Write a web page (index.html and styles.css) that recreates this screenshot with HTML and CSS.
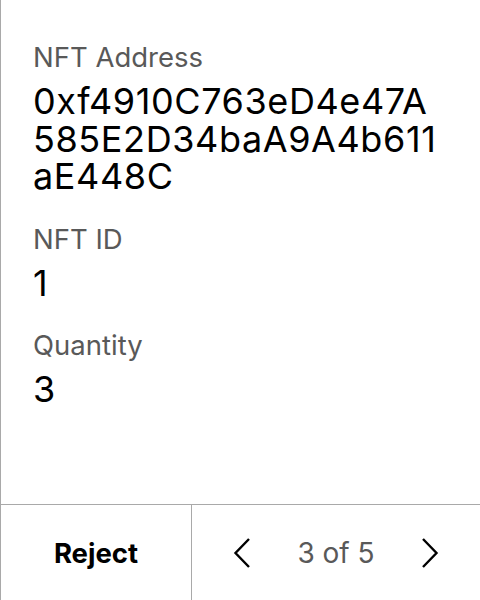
FILE: index.html
```html
<!DOCTYPE html>
<html>
<head>
<meta charset="utf-8">
<link rel="stylesheet" href="styles.css">
</head>
<body>
<div class="screen">
  <div class="content">
    <div class="field">
      <div class="label">NFT Address</div>
      <div class="value">0xf4910C763eD4e47A<br>585E2D34baA9A4b611<br>aE448C</div>
    </div>
    <div class="field">
      <div class="label">NFT ID</div>
      <div class="value">1</div>
    </div>
    <div class="field">
      <div class="label">Quantity</div>
      <div class="value">3</div>
    </div>
  </div>
  <div class="footer">
    <div class="reject">Reject</div>
    <div class="pager">
      <svg class="chev" viewBox="0 0 18 32" width="18" height="32"><path d="M16 2 L2.5 16 L16 30" fill="none" stroke="#000" stroke-width="2.4"/></svg>
      <span class="count">3 of 5</span>
      <svg class="chev" viewBox="0 0 18 32" width="18" height="32"><path d="M2 2 L15.5 16 L2 30" fill="none" stroke="#000" stroke-width="2.4"/></svg>
    </div>
  </div>
</div>
</body>
</html>
```
FILE: styles.css
```css
html, body { margin: 0; padding: 0; background: #fff; }
body { font-family: Inter, "Noto Sans", sans-serif; color: #000; }
.screen {
  height: 600px;
  border-left: 1px solid #a9a9a9;
  display: flex;
  flex-direction: column;
  box-sizing: border-box;
}
.content {
  flex: 1;
  padding: 41px 0 0 32px;
  display: flex;
  flex-direction: column;
  gap: 27px;
}
.label {
  font-size: 27.5px;
  line-height: 32px;
  color: #595959;
}
.value {
  font-size: 36px;
  line-height: 37.5px;
  letter-spacing: 0.6px;
  margin-top: 10px;
}
.footer {
  height: 96px;
  border-top: 1px solid #a9a9a9;
  display: grid;
  grid-template-columns: 191px 1fr;
  box-sizing: border-box;
}
.reject {
  border-right: 1px solid #a9a9a9;
  display: flex;
  align-items: center;
  justify-content: center;
  font-size: 27.5px;
  font-weight: 700;
}
.pager {
  display: flex;
  align-items: center;
  justify-content: center;
  gap: 46px;
}
.count { font-size: 28px; color: #595959; }
.chev { display: block; }
```
